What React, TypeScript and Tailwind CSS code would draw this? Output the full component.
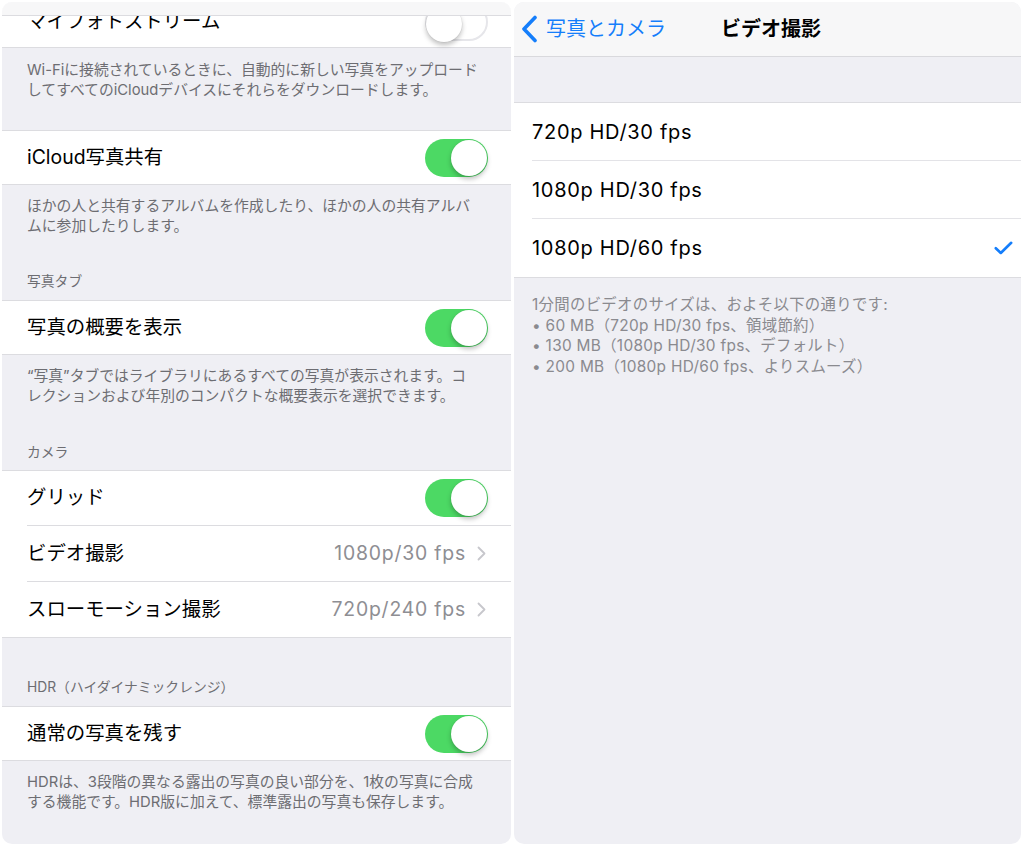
import React from 'react';

const Toggle: React.FC<{ on?: boolean }> = ({ on = true }) => (
    <div
        className={`relative w-[63px] h-[38px] rounded-full shrink-0 ${on ? 'bg-[#4cd964]' : 'bg-white border-2 border-[#e6e6ea]'}`}
    >
        <div
            className={`absolute top-[1px] w-[36px] h-[36px] rounded-full bg-white shadow-[0_3px_5px_rgba(0,0,0,0.25),0_0_0_0.5px_rgba(0,0,0,0.08)] ${on ? 'right-[1px]' : 'left-[-1px] top-[-1px]'}`}
        />
    </div>
);

const Chevron = () => (
    <svg width="9" height="15" viewBox="0 0 9 15" className="shrink-0">
        <path d="M1.5 1.5 L7.5 7.5 L1.5 13.5" fill="none" stroke="#c7c7cc" strokeWidth="1.8" strokeLinecap="round" strokeLinejoin="round" />
    </svg>
);

const Check = () => (
    <svg width="19" height="14" viewBox="0 0 19 14">
        <path d="M1.8 7.2 L6.8 12 L17.2 1.8" fill="none" stroke="#157efb" strokeWidth="2.6" strokeLinecap="round" strokeLinejoin="round" />
    </svg>
);

const Desc: React.FC<{ lines: string[]; className?: string }> = ({ lines, className = '' }) => (
    <div className={`px-[25px] text-[14.8px] leading-[19.5px] text-[#6d6d72] ${className}`}>
        {lines.map((l, i) => (
            <div key={i} className="whitespace-nowrap">{l}</div>
        ))}
    </div>
);

const Header: React.FC<{ text: string; className?: string }> = ({ text, className = '' }) => (
    <div className={`px-[25px] text-[13.8px] leading-[18px] text-[#6d6d72] ${className}`}>{text}</div>
);

const ToggleRow: React.FC<{ label: string; on?: boolean }> = ({ label, on = true }) => (
    <div className="h-[55px] bg-white border-y border-[#dcdce0] flex items-center justify-between pl-[25px] pr-[23px]">
        <span className="text-[19.4px] text-black">{label}</span>
        <Toggle on={on} />
    </div>
);

const ValueRow: React.FC<{ label: string; value: string }> = ({ label, value }) => (
    <div className="h-[55px] flex items-center justify-between pr-[25px]">
        <span className="text-[19.4px] text-black">{label}</span>
        <div className="flex items-center gap-[11px]">
            <span className="text-[19.4px] tracking-[0.8px] text-[#8e8e93]">{value}</span>
            <Chevron />
        </div>
    </div>
);

const LeftPanel = () => (
    <div className="relative w-[509px] h-full bg-[#efeff4] rounded-[10px] overflow-hidden flex flex-col">
        <div className="absolute top-0 left-0 right-0 h-[14px] bg-[#f7f7f8] border-b border-[#dcdce0] z-10" />
        <div className="h-[46px] bg-white border-b border-[#dcdce0] flex items-center justify-between pl-[25px] pr-[23px] pb-[6px]">
            <span className="text-[19.4px] text-black">マイフォトストリーム</span>
            <Toggle on={false} />
        </div>
        <Desc className="pt-[13px] h-[82px]" lines={['Wi-Fiに接続されているときに、自動的に新しい写真をアップロード', 'してすべてのiCloudデバイスにそれらをダウンロードします。']} />
        <ToggleRow label="iCloud写真共有" />
        <Desc className="pt-[12px]" lines={['ほかの人と共有するアルバムを作成したり、ほかの人の共有アルバ', 'ムに参加したりします。']} />
        <Header text="写真タブ" className="mt-[36px] pb-[10px]" />
        <ToggleRow label="写真の概要を表示" />
        <Desc className="pt-[12px]" lines={['“写真”タブではライブラリにあるすべての写真が表示されます。コ', 'レクションおよび年別のコンパクトな概要表示を選択できます。']} />
        <Header text="カメラ" className="mt-[37px] pb-[9px]" />
        <div className="bg-white border-y border-[#dcdce0] pl-[25px]">
            <div className="h-[55px] flex items-center justify-between pr-[23px] border-b border-[#dcdce0]">
                <span className="text-[19.4px] text-black">グリッド</span>
                <Toggle />
            </div>
            <div className="border-b border-[#dcdce0]">
                <ValueRow label="ビデオ撮影" value="1080p/30 fps" />
            </div>
            <ValueRow label="スローモーション撮影" value="720p/240 fps" />
        </div>
        <Header text="HDR（ハイダイナミックレンジ）" className="mt-[40px] pb-[10px]" />
        <ToggleRow label="通常の写真を残す" />
        <Desc className="pt-[11px] leading-[20px]" lines={['HDRは、3段階の異なる露出の写真の良い部分を、1枚の写真に合成', 'する機能です。HDR版に加えて、標準露出の写真も保存します。']} />
    </div>
);

const options = ['720p HD/30 fps', '1080p HD/30 fps', '1080p HD/60 fps'];

const RightPanel = () => (
    <div className="w-[507px] h-full bg-[#efeff4] rounded-[10px] overflow-hidden flex flex-col">
        <div className="h-[55px] shrink-0 bg-[#f7f7f8] border-b border-[#d9d9dd] flex items-center pl-[7px] pb-[1px]">
            <svg width="17" height="28" viewBox="0 0 17 28" className="shrink-0">
                <path d="M14 2.5 L3 14 L14 25.5" fill="none" stroke="#157efb" strokeWidth="3.6" strokeLinecap="round" strokeLinejoin="round" />
            </svg>
            <span className="ml-[8px] text-[20px] text-[#157efb]">写真とカメラ</span>
            <span className="ml-[55px] text-[20px] font-bold text-black">ビデオ撮影</span>
        </div>
        <div className="h-[45px] shrink-0" />
        <div className="bg-white border-y border-[#dcdce0] pl-[18px]">
            {options.map((o, i) => (
                <div
                    key={o}
                    className={`h-[58px] flex items-center justify-between pr-[8px] ${i < options.length - 1 ? 'border-b border-[#e3e3e7]' : ''}`}
                >
                    <span className="text-[20px] tracking-[0.7px] text-black">{o}</span>
                    {i === 2 && <Check />}
                </div>
            ))}
        </div>
        <div className="pt-[17px] pl-[18px] text-[15.4px] tracking-[0.3px] leading-[20.6px] text-[#8a8a8f] whitespace-nowrap">
            <div>1分間のビデオのサイズは、およそ以下の通りです:</div>
            <div>• 60 MB（720p HD/30 fps、領域節約）</div>
            <div>• 130 MB（1080p HD/30 fps、デフォルト）</div>
            <div>• 200 MB（1080p HD/60 fps、よりスムーズ）</div>
        </div>
    </div>
);

export default function App() {
    return (
        <div className="w-[1024px] h-[846px] bg-white flex gap-[3px] px-[2px] py-[2px] font-['Inter','Noto_Sans_CJK_JP',sans-serif]">
            <LeftPanel />
            <RightPanel />
        </div>
    );
}
